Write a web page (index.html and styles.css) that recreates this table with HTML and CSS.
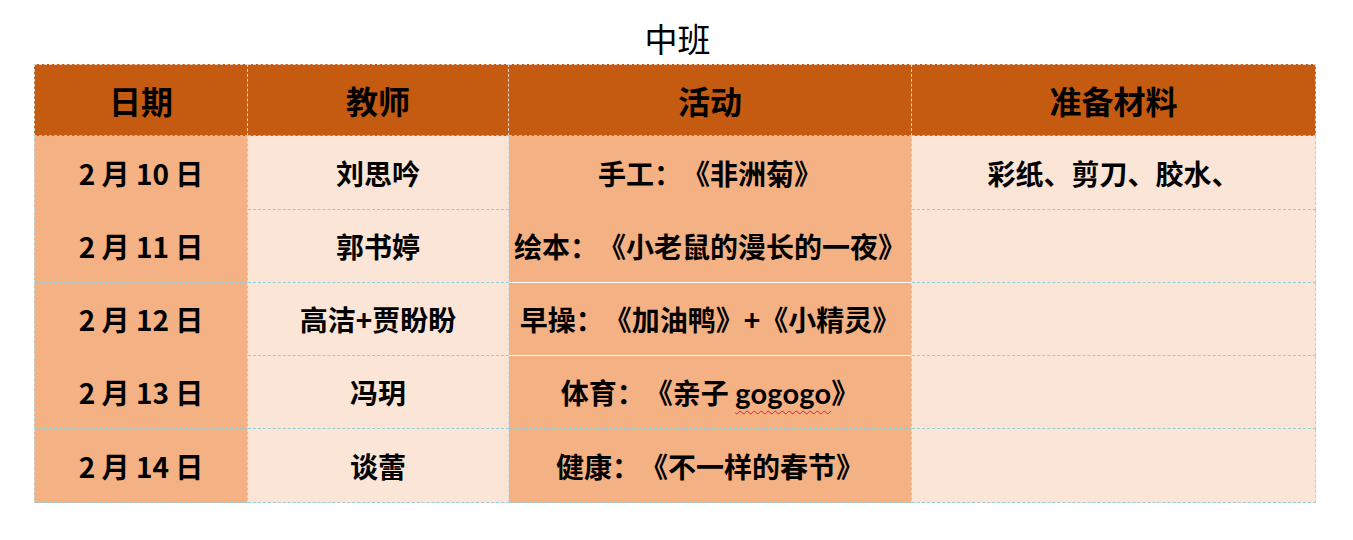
FILE: index.html
```html
<!DOCTYPE html>
<html lang="zh">
<head>
<meta charset="utf-8">
<title>中班</title>
<link rel="stylesheet" href="styles.css">
</head>
<body>
<div class="page">
  <h1 class="title">中班</h1>
  <div class="sheet">
    <table class="plan">
      <colgroup>
        <col class="c1"><col class="c2"><col class="c3"><col class="c4">
      </colgroup>
      <thead>
        <tr>
          <th class="first">日期</th>
          <th>教师</th>
          <th>活动</th>
          <th class="last">准备材料</th>
        </tr>
      </thead>
      <tbody>
        <tr class="tall">
          <td class="dark first">2 月 10 日</td>
          <td class="light">刘思吟</td>
          <td class="dark">手工：《非洲菊》</td>
          <td class="light last">彩纸、剪刀、胶水、</td>
        </tr>
        <tr>
          <td class="dark first">2 月 11 日</td>
          <td class="light">郭书婷</td>
          <td class="dark white-rule">绘本：《小老鼠的漫长的一夜》</td>
          <td class="light last"></td>
        </tr>
        <tr>
          <td class="dark first">2 月 12 日</td>
          <td class="light">高洁+贾盼盼</td>
          <td class="dark white-rule">早操：《加油鸭》+《小精灵》</td>
          <td class="light last"></td>
        </tr>
        <tr>
          <td class="dark first">2 月 13 日</td>
          <td class="light">冯玥</td>
          <td class="dark">体育：《亲子 <span class="latin">gogogo</span>》</td>
          <td class="light last"></td>
        </tr>
        <tr class="tall">
          <td class="dark first">2 月 14 日</td>
          <td class="light">谈蕾</td>
          <td class="dark">健康：《不一样的春节》</td>
          <td class="light last"></td>
        </tr>
      </tbody>
    </table>
  </div>
</div>
</body>
</html>
```

FILE: styles.css
```css
html, body {
  margin: 0;
  padding: 0;
  background: #ffffff;
}

.page {
  width: 1353px;
  height: 540px;
  font-family: "Noto Sans CJK SC", "Noto Sans", sans-serif;
  color: #000;
  text-spacing-trim: space-all;
  font-kerning: none;
}

.title {
  margin: 0;
  height: 62px;
  line-height: 76px;
  text-align: center;
  font-size: 33px;
  font-weight: 400;
  padding-left: 2px;
}

.sheet {
  margin-left: 34px;
  width: 1282px;
  background: #C55A11;
  padding-top: 2px;
  background-clip: content-box;
}

.plan {
  width: 1282px;
  table-layout: fixed;
  border-collapse: separate;
  border-spacing: 0;
}

.c1 { width: 214px; }
.c2 { width: 261px; }
.c3 { width: 403px; }
.c4 { width: 404px; }

.plan th,
.plan td {
  box-sizing: border-box;
  padding: 0;
  text-align: center;
  vertical-align: middle;
  font-weight: 700;
  white-space: nowrap;
  overflow: visible;
}

.plan th {
  height: 72px;
  background: #C55A11;
  font-size: 32px;
  border-top: 1px dashed #e6d6cc;
  border-right: 1px dashed #e6d6cc;
  border-bottom: 1px dashed #92cddc;
}

.plan th.first {
  border-left: 1px dashed #d8d8d8;
}

.plan th.last {
  border-right: 1px dashed #d8d8d8;
}

.plan td {
  height: 73px;
  font-size: 28px;
  border-right: 1px dashed #dcdcdc;
  border-bottom: 1px dashed #92cddc;
}

.plan tr.tall td {
  height: 74px;
}

.plan td.first {
  border-left: 1px dashed #c8dcdc;
}

.plan td.last {
  border-right: 1px dashed #c8c8c8;
}

.dark { background: #F4B183; }
.light { background: #FBE5D6; }

.plan td.white-rule {
  border-bottom: 1px solid #ffffff;
}

.latin {
  font-family: "Lato", "Open Sans", sans-serif;
  font-weight: 700;
  font-size: 29px;
  text-decoration: underline wavy #e02020;
  text-decoration-thickness: 1px;
  text-underline-offset: 6px;
}
```
